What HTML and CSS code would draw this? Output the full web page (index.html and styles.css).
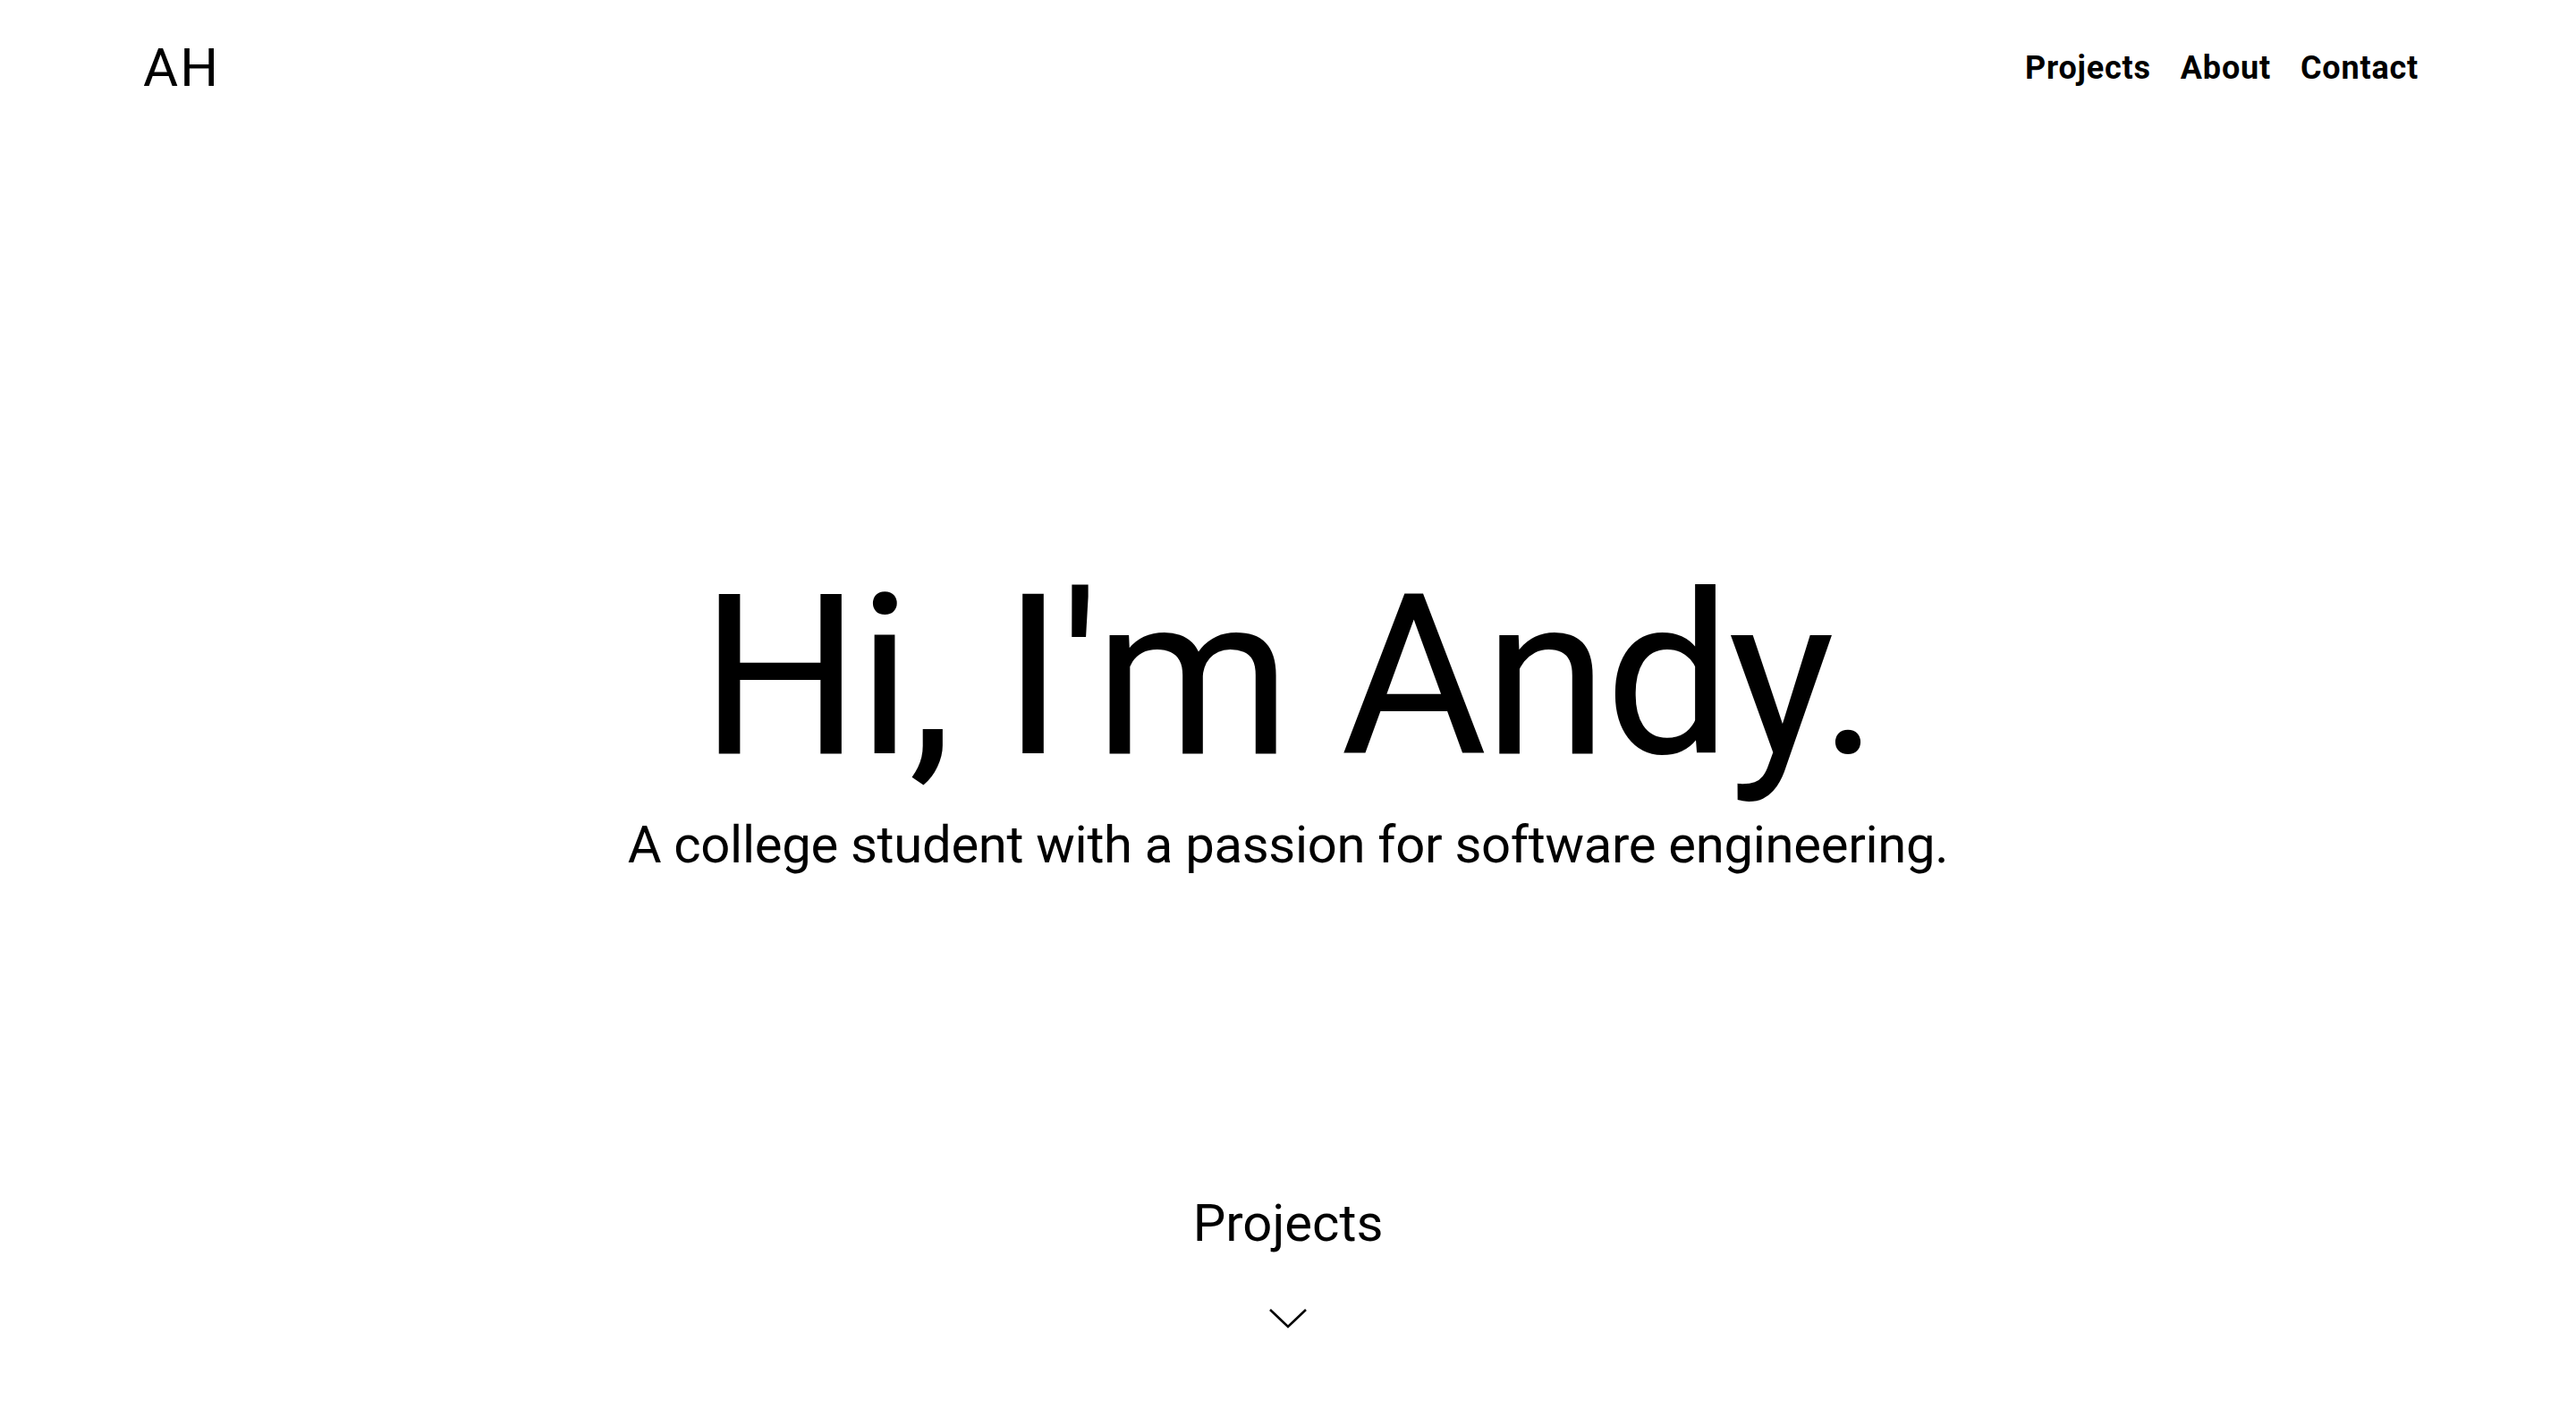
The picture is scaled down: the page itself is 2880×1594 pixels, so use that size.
FILE: index.html
```html
<!DOCTYPE html>
<html lang="en">
<head>
<meta charset="utf-8">
<title>Andy</title>
<link rel="stylesheet" href="styles.css">
</head>
<body>
<header class="site-header">
  <a class="logo" href="#">AH</a>
  <nav class="nav">
    <a class="nav-link" href="#projects">Projects</a>
    <a class="nav-link" href="#about">About</a>
    <a class="nav-link" href="#contact">Contact</a>
  </nav>
</header>
<main class="hero">
  <h1 class="hero-title">Hi, I'm Andy.</h1>
  <p class="hero-sub">A college student with a passion for software engineering.</p>
  <section class="projects-intro" id="projects">
    <h2 class="projects-title">Projects</h2>
    <svg class="chevron" width="44" height="26" viewBox="0 0 44 26" aria-hidden="true">
      <polyline points="2,3 22,22 42,3" fill="none" stroke="#000" stroke-width="2.6"/>
    </svg>
  </section>
</main>
</body>
</html>
```
FILE: styles.css
```css
* { box-sizing: border-box; }
html, body { margin: 0; padding: 0; background: #fff; }
body {
  font-family: Roboto, "Liberation Sans", sans-serif;
  color: #000;
}
a { color: inherit; text-decoration: none; }

.site-header {
  display: flex;
  align-items: center;
  justify-content: space-between;
  padding: 46px 176px 46px 160px;
}
.logo {
  font-size: 60px;
  line-height: 60px;
  font-weight: 400;
  letter-spacing: 2px;
}
.nav {
  display: flex;
  gap: 33px;
}
.nav-link {
  font-size: 36px;
  line-height: 36px;
  font-weight: 700;
  letter-spacing: 0.8px;
}

.hero {
  display: flex;
  flex-direction: column;
  align-items: center;
  padding-top: 479px;
}
.hero-title {
  margin: 0;
  font-size: 251px;
  line-height: 251px;
  font-weight: 400;
  letter-spacing: -3.5px;
}
.hero-sub {
  margin: 27px 0 0;
  font-size: 58px;
  line-height: 70px;
  font-weight: 400;
  letter-spacing: -0.3px;
}
.projects-intro {
  display: flex;
  flex-direction: column;
  align-items: center;
  padding-top: 353px;
}
.projects-title {
  margin: 0;
  font-size: 58px;
  line-height: 70px;
  font-weight: 400;
}
.chevron {
  display: block;
  margin-top: 59px;
}
```
